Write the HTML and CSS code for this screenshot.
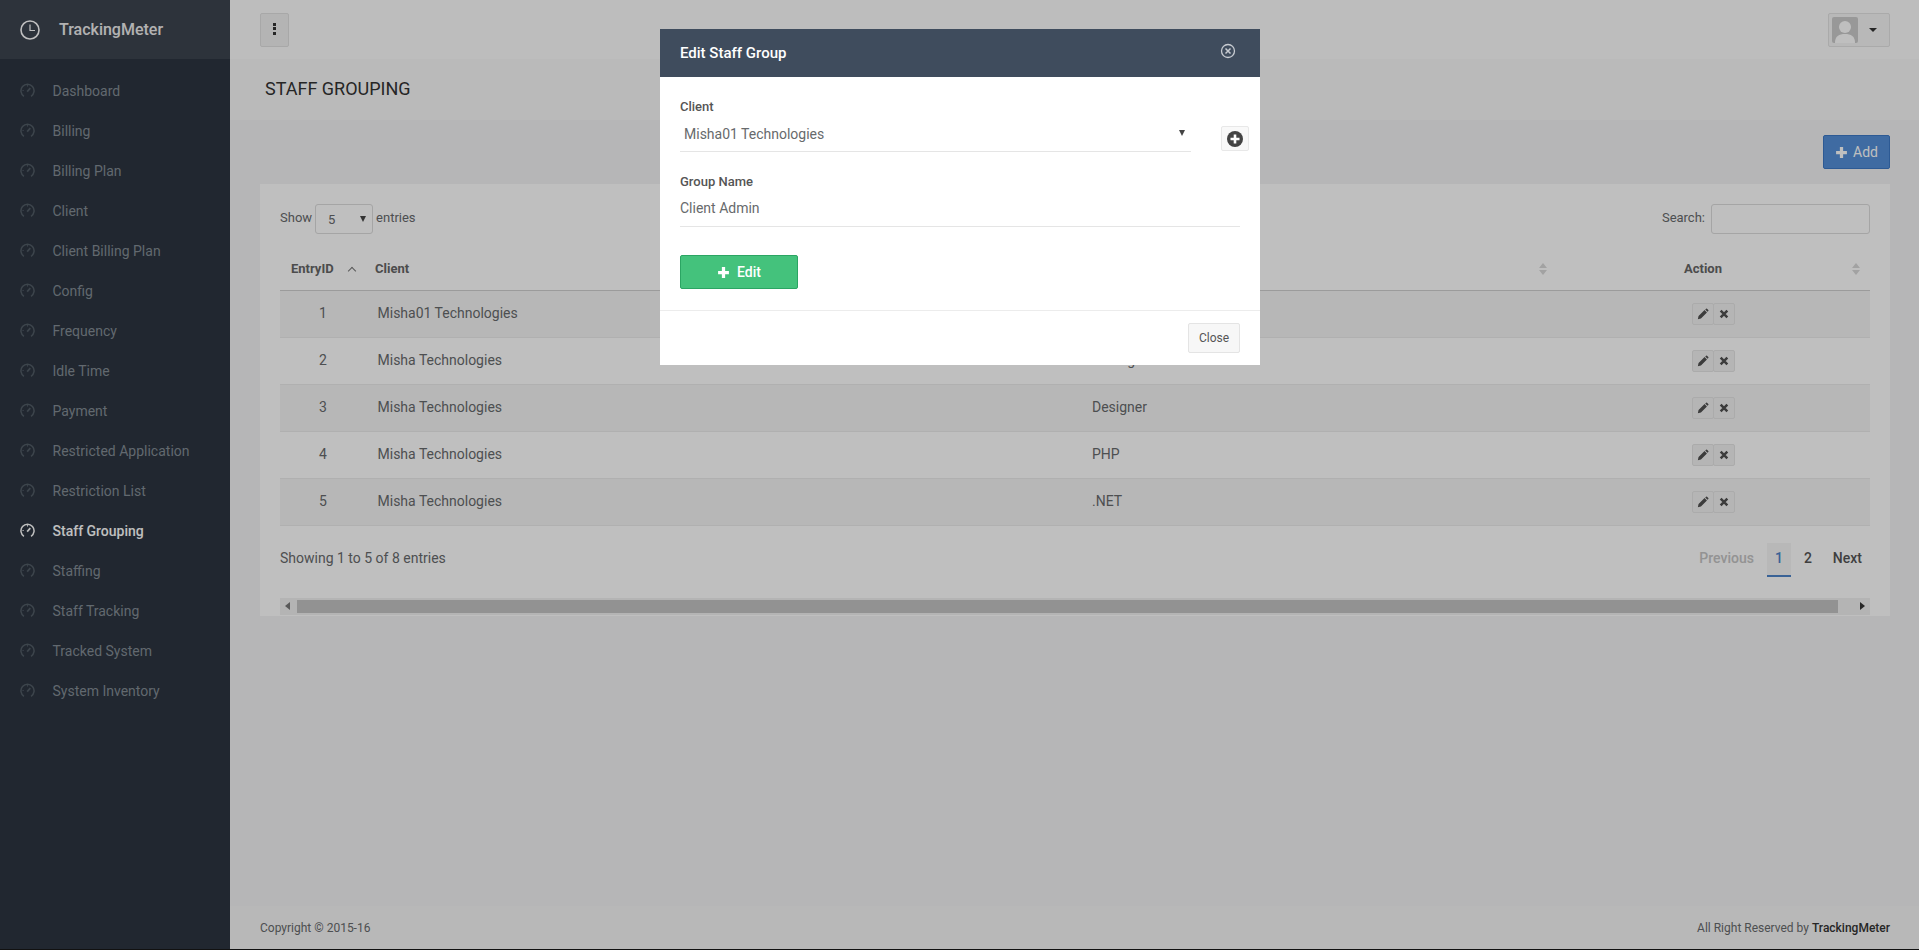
FILE: index.html
```html
<!DOCTYPE html>
<html lang="en">
<head>
<meta charset="utf-8">
<title>Staff Grouping - TrackingMeter</title>
<link rel="stylesheet" href="styles.css">
</head>
<body>
<svg class="defs" width="0" height="0" aria-hidden="true">
  <defs>
    <symbol id="gauge" viewBox="0 0 16 16">
      <path d="M4.2 14.2A7 7 0 1 1 11.8 14.2" fill="none" stroke="currentColor" stroke-width="1.6"/>
      <path d="M7.6 9.2 11 5.4" fill="none" stroke="currentColor" stroke-width="1.8"/>
      <path d="M8 2.2v1.6M2.6 8h1.4" stroke="currentColor" stroke-width="1"/>
    </symbol>
    <symbol id="pencil" viewBox="0 0 14 14">
      <path d="M1 13l.8-3.6 7-7 2.8 2.8-7 7zM9.6 1.8l1-1q.6-.5 1.100 0l1.500 1.500q.5.5 0 1.100l-1 1z" fill="currentColor"/>
    </symbol>
    <symbol id="cross" viewBox="0 0 12 12">
      <path d="M2 2l8 8M10 2l-8 8" stroke="currentColor" stroke-width="3" fill="none"/>
    </symbol>
    <symbol id="plus" viewBox="0 0 12 12">
      <path d="M6 1v10M1 6h10" stroke="currentColor" stroke-width="3" fill="none"/>
    </symbol>
  </defs>
</svg>
<div class="app">
  <aside class="sidebar">
    <div class="brand">
      <svg class="brand-icon" viewBox="0 0 20 20"><circle cx="10" cy="10" r="9" fill="none" stroke="currentColor" stroke-width="1.6"/><path d="M10 4.500V10.500H15" fill="none" stroke="currentColor" stroke-width="1.200"/></svg>
      <span>TrackingMeter</span>
    </div>
    <nav class="nav">
      <a class="nav-item"><svg class="nav-icon"><use href="#gauge"/></svg>Dashboard</a>
      <a class="nav-item"><svg class="nav-icon"><use href="#gauge"/></svg>Billing</a>
      <a class="nav-item"><svg class="nav-icon"><use href="#gauge"/></svg>Billing Plan</a>
      <a class="nav-item"><svg class="nav-icon"><use href="#gauge"/></svg>Client</a>
      <a class="nav-item"><svg class="nav-icon"><use href="#gauge"/></svg>Client Billing Plan</a>
      <a class="nav-item"><svg class="nav-icon"><use href="#gauge"/></svg>Config</a>
      <a class="nav-item"><svg class="nav-icon"><use href="#gauge"/></svg>Frequency</a>
      <a class="nav-item"><svg class="nav-icon"><use href="#gauge"/></svg>Idle Time</a>
      <a class="nav-item"><svg class="nav-icon"><use href="#gauge"/></svg>Payment</a>
      <a class="nav-item"><svg class="nav-icon"><use href="#gauge"/></svg>Restricted Application</a>
      <a class="nav-item"><svg class="nav-icon"><use href="#gauge"/></svg>Restriction List</a>
      <a class="nav-item active"><svg class="nav-icon"><use href="#gauge"/></svg>Staff Grouping</a>
      <a class="nav-item"><svg class="nav-icon"><use href="#gauge"/></svg>Staffing</a>
      <a class="nav-item"><svg class="nav-icon"><use href="#gauge"/></svg>Staff Tracking</a>
      <a class="nav-item"><svg class="nav-icon"><use href="#gauge"/></svg>Tracked System</a>
      <a class="nav-item"><svg class="nav-icon"><use href="#gauge"/></svg>System Inventory</a>
    </nav>
  </aside>
  <div class="main">
    <header class="topbar">
      <button class="menu-btn"><span class="dot"></span><span class="dot"></span><span class="dot"></span></button>
      <div class="user-btn">
        <svg class="avatar" viewBox="0 0 26 26"><rect width="26" height="26" rx="2" fill="#cbcbcb"/><circle cx="13" cy="10" r="6" fill="#fff"/><path d="M3 26c0-7 4-9 10-9s10 2 10 9z" fill="#fff"/></svg>
        <span class="caret"></span>
      </div>
    </header>
    <div class="title-band"><h1 class="title">STAFF GROUPING</h1></div>
    <main class="content">
      <div class="actions">
        <button class="add-btn"><svg class="ic-plus"><use href="#plus"/></svg>Add</button>
      </div>
      <section class="card">
        <div class="table-tools">
          <div class="length">Show <span class="length-select"><span>5</span><span class="tri"></span></span> entries</div>
          <div class="search">Search: <span class="search-box"></span></div>
        </div>
        <table class="table">
          <thead>
            <tr>
              <th class="c-id">EntryID<span class="sort-up"></span></th>
              <th class="c-client">Client</th>
              <th class="c-group">Group Name<span class="sort"></span></th>
              <th class="c-action">Action<span class="sort"></span></th>
            </tr>
          </thead>
          <tbody>
            <tr><td class="num">1</td><td class="name">Misha01 Technologies</td><td>Client Admin</td><td class="acts"><span class="btn-group"><span class="ib"><svg class="ic-pen"><use href="#pencil"/></svg></span><span class="ib"><svg class="ic-x"><use href="#cross"/></svg></span></span></td></tr>
            <tr><td class="num">2</td><td class="name">Misha Technologies</td><td>Manager</td><td class="acts"><span class="btn-group"><span class="ib"><svg class="ic-pen"><use href="#pencil"/></svg></span><span class="ib"><svg class="ic-x"><use href="#cross"/></svg></span></span></td></tr>
            <tr><td class="num">3</td><td class="name">Misha Technologies</td><td>Designer</td><td class="acts"><span class="btn-group"><span class="ib"><svg class="ic-pen"><use href="#pencil"/></svg></span><span class="ib"><svg class="ic-x"><use href="#cross"/></svg></span></span></td></tr>
            <tr><td class="num">4</td><td class="name">Misha Technologies</td><td>PHP</td><td class="acts"><span class="btn-group"><span class="ib"><svg class="ic-pen"><use href="#pencil"/></svg></span><span class="ib"><svg class="ic-x"><use href="#cross"/></svg></span></span></td></tr>
            <tr><td class="num">5</td><td class="name">Misha Technologies</td><td>.NET</td><td class="acts"><span class="btn-group"><span class="ib"><svg class="ic-pen"><use href="#pencil"/></svg></span><span class="ib"><svg class="ic-x"><use href="#cross"/></svg></span></span></td></tr>
          </tbody>
        </table>
        <div class="table-foot">
          <div class="info">Showing 1 to 5 of 8 entries</div>
          <div class="pager"><span class="pg disabled">Previous</span><span class="pg current">1</span><span class="pg">2</span><span class="pg">Next</span></div>
        </div>
        <div class="hscroll"><span class="arrow left"></span><span class="thumb"></span><span class="arrow right"></span></div>
      </section>
    </main>
    <footer class="footer">
      <span>Copyright © 2015-16</span>
      <span>All Right Reserved by <b>TrackingMeter</b></span>
    </footer>
  </div>
</div>
<div class="backdrop"></div>
<div class="modal">
  <div class="modal-head">
    <span>Edit Staff Group</span>
    <svg class="modal-close" viewBox="0 0 16 16"><circle cx="8" cy="8" r="6.500" fill="none" stroke="currentColor" stroke-width="1.300"/><path d="M5.500 5.500l5 5M10.500 5.500l-5 5" stroke="currentColor" stroke-width="1.500"/></svg>
  </div>
  <div class="modal-body">
    <div class="client-row">
      <div class="field client-field">
        <label class="lbl">Client</label>
        <div class="select-line"><span class="select-value">Misha01 Technologies</span><span class="tri"></span></div>
      </div>
      <button class="circle-btn"><svg viewBox="0 0 16 16"><circle cx="8" cy="8" r="8" fill="currentColor"/><path d="M8 3.500v9M3.500 8h9" stroke="#fff" stroke-width="2.600"/></svg></button>
    </div>
    <div class="field">
      <label class="lbl">Group Name</label>
      <div class="input-line">Client Admin</div>
    </div>
    <button class="edit-btn"><svg class="ic-plus"><use href="#plus"/></svg>Edit</button>
  </div>
  <div class="modal-foot"><button class="close-btn">Close</button></div>
</div>
</body>
</html>
```

FILE: styles.css
```css
* { box-sizing: border-box; }
html, body { margin: 0; height: 100%; overflow: hidden; }
body { font-family: Roboto, "Liberation Sans", sans-serif; font-size: 14px; color: #676a6c; background: #111; }
.defs { position: absolute; }
.app { display: flex; height: 949px; }

.sidebar { width: 230px; flex: none; background: #2c3540; display: flex; flex-direction: column; }
.brand { height: 59px; background: #3d444f; display: flex; align-items: center; padding-left: 20px; color: #eee; font-size: 16px; font-weight: 500; }
.brand-icon { width: 20px; height: 20px; margin-right: 19px; color: #fff; }
.nav { padding-top: 12px; display: flex; flex-direction: column; }
.nav-item { height: 40px; display: flex; align-items: center; padding-left: 20px; color: #838c95; font-size: 14px; }
.nav-icon { width: 15px; height: 15px; margin-right: 17.500px; color: #525c66; position: relative; top: -1px; }
.nav-item.active { color: #fff; font-weight: 500; }
.nav-item.active .nav-icon { color: #fff; }

.main { flex: 1; min-width: 0; display: flex; flex-direction: column; background: #f3f3f4; }
.topbar { height: 59px; background: #fdfdfd; display: flex; justify-content: space-between; align-items: center; padding: 0 29px 0 30px; }
.menu-btn { width: 29px; height: 34px; padding: 0 0 2px; background: #f1f1f1; border: 1px solid #e0e0e0; border-radius: 2px; display: flex; flex-direction: column; align-items: center; justify-content: center; gap: 1.500px; }
.dot { width: 3px; height: 3px; background: #333; display: block; }
.user-btn { width: 62px; height: 34px; border: 1px solid #e3e3e3; border-radius: 2px; background: #f6f6f6; display: flex; align-items: center; padding-left: 3px; }
.avatar { width: 26px; height: 26px; }
.caret { width: 0; height: 0; margin-left: 11px; border: 4px solid transparent; border-top-color: #333; border-bottom: 0; }
.title-band { height: 61px; background: #f9f9f9; padding: 20px 35px 0; }
.title { margin: 0; font-size: 18px; font-weight: 400; line-height: 20px; color: #333; }

.content { flex: 1; padding: 15px 29px 0 30px; }
.actions { height: 49px; display: flex; justify-content: flex-end; }
.add-btn { width: 67px; height: 34px; background: #548fd9; border: 1px solid #3d79c6; border-radius: 2px; color: #fff; font: 14px Roboto, sans-serif; display: flex; align-items: center; justify-content: center; gap: 5px; padding: 0; }
.ic-plus { width: 13px; height: 13px; }

.card { background: #fff; padding: 20px 20px 1px; height: 432px; }
.table-tools { display: flex; justify-content: space-between; align-items: flex-start; height: 45px; font-size: 13px; }
.length, .search { display: flex; align-items: center; height: 27px; gap: 3px; }
.search { gap: 6px; }
.length-select { width: 58px; height: 30px; margin-bottom: -3px; border: 1px solid #dcdcdc; border-radius: 3px; display: flex; align-items: center; justify-content: space-between; padding: 0 6px 0 12px; }
.search-box { width: 159px; height: 30px; margin-bottom: -3px; border: 1px solid #dcdcdc; border-radius: 3px; background: #fff; display: block; }
.tri { width: 0; height: 0; border: 3px solid transparent; border-top: 6px solid #444; border-bottom: 0; display: block; }

.table { width: 100%; border-collapse: collapse; table-layout: fixed; }
.table th { height: 41px; text-align: left; font-size: 13px; font-weight: 700; color: #666; border-bottom: 1px solid #cfcfcf; position: relative; padding: 0 0 2px; }
.table td { height: 47px; padding: 0 0 2px; border-bottom: 1px solid #ebebeb; color: #676a6c; }
.table tbody tr:nth-child(odd) td { background: #f5f5f5; }
.table th.c-id { width: 95px; padding-left: 11px; }
.c-client { width: 717px; }
.c-group { width: 465px; }
.table td.num { text-align: center; padding-right: 9px; }
.table td.name { padding-left: 2.500px; }
.table th.c-action { padding-left: 127px; }
.table td.acts { padding: 0 0 0 135px; }
.sort-up { position: absolute; right: 20px; top: 19px; width: 6px; height: 6px; border-left: 1.500px solid #777; border-top: 1.500px solid #777; transform: rotate(45deg); }
.sort { position: absolute; right: 9px; top: 14px; width: 10px; height: 12px; }
.sort::before, .sort::after { content: ""; position: absolute; left: 1px; border: 4px solid transparent; }
.sort::before { top: 0; border-top: 0; border-bottom: 5px solid #d8d8d8; }
.sort::after { bottom: 0; border-bottom: 0; border-top: 5px solid #d8d8d8; }
.btn-group { display: inline-flex; vertical-align: middle; }
.ib { width: 22px; height: 22px; background: #f2f2f2; border: 1px solid #e5e5e5; margin-right: -1px; display: flex; align-items: center; justify-content: center; color: #505050; border-radius: 2px; }
.ic-pen { width: 12px; height: 12px; }
.ic-x { width: 10px; height: 10px; }

.table-foot { display: flex; justify-content: space-between; align-items: center; height: 72px; padding-bottom: 8px; }
.pager { display: flex; font-weight: 500; font-size: 14px; color: #555; align-items: flex-start; height: 34px; }
.pg { height: 34px; padding: 0 8px; margin-left: 5px; display: flex; align-items: center; }
.pg.disabled { color: #c4c4c4; margin-left: 0; }
.pg.current { color: #4d83c8; background: #f6f6f6; border-bottom: 2px solid #4d83c8; width: 24px; justify-content: center; padding: 0 0 2px; margin-top: 2px; }
.hscroll { height: 17px; background: #f0f0f0; display: flex; align-items: center; justify-content: space-between; padding: 0 5px; }
.thumb { width: 1541px; height: 13px; background: #c3c3c3; margin: 0 auto 0 7px; }
.arrow { width: 0; height: 0; border: 4px solid transparent; }
.arrow.left { border-left: 0; border-right: 5px solid #777; }
.arrow.right { border-right: 0; border-left: 5px solid #333; }

.footer { height: 43px; background: #f6f6f6; display: flex; justify-content: space-between; align-items: center; padding: 0 29px 0 30px; font-size: 12px; }
.footer b { font-weight: 500; color: #333; }

.backdrop { position: fixed; inset: 0 0 1px 0; background: rgba(0,0,0,.25); }
.modal { position: fixed; left: 660px; top: 29px; width: 600px; height: 336px; background: #fff; display: flex; flex-direction: column; }
.modal-head { height: 48px; flex: none; background: #3f4c5d; color: #fff; font-size: 15px; font-weight: 500; display: flex; justify-content: space-between; align-items: center; padding: 0 24px 0 20px; }
.modal-close { width: 16px; height: 16px; margin-top: -4px; color: #c8ccd2; }
.modal-body { flex: 1; padding: 22px 20px 0; border-bottom: 1px solid #ececec; }
.client-row { display: flex; gap: 30px; }
.client-field { width: 511px; flex: none; }
.field { font-size: 14px; }
.lbl { display: block; font-size: 13px; font-weight: 500; color: #555; line-height: 16px; }
.select-line { height: 37px; border-bottom: 1px solid #e5e5e5; display: flex; align-items: center; justify-content: space-between; padding: 0 6px 0 4px; }
.select-value { padding-top: 2px; }
.input-line { height: 37px; border-bottom: 1px solid #e5e5e5; display: flex; align-items: center; }
.circle-btn { flex: none; margin-top: 27px; width: 28px; height: 25px; padding: 0; background: #f9f9f9; border: 1px solid #e8e8e8; border-radius: 2px; display: flex; align-items: center; justify-content: center; color: #444; }
.circle-btn svg { width: 16px; height: 16px; }
.client-row + .field { margin-top: 22px; }
.edit-btn { margin-top: 28px; width: 118px; height: 34px; background: #44c27c; border: 1px solid #2ba563; border-radius: 2px; color: #fff; font: 500 14px Roboto, sans-serif; display: flex; align-items: center; justify-content: center; gap: 7px; padding: 0; }
.modal-foot { height: 54px; flex: none; display: flex; justify-content: flex-end; align-items: center; padding: 0 20px; }
.close-btn { width: 52px; height: 30px; padding: 0; background: #f7f7f7; border: 1px solid #e4e4e4; border-radius: 2px; font: 12px Roboto, sans-serif; color: #555; }
```
